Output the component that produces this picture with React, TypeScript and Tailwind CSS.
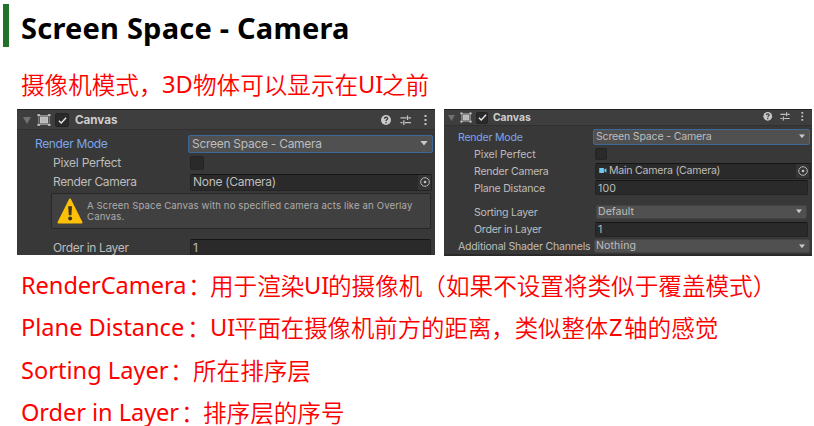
import React from "react";

const CJK = "font-['Noto_Sans_CJK_SC',sans-serif]";
const LATIN = "font-['Noto_Sans','Noto_Sans_CJK_SC',sans-serif]";

type Run = { text: string; box: string };

function Line({ runs, className }: { runs: Run[]; className: string }) {
  return (
    <p className={`flex items-center whitespace-nowrap pl-[21px] text-[#ff0000] ${className}`}>
      {runs.map((r, i) => (
        <span key={i} className={`block shrink-0 whitespace-pre ${r.box}`}>
          {r.text}
        </span>
      ))}
    </p>
  );
}

const han = `${CJK} text-[23.6px] font-[350]`;
const lat = `${LATIN} text-[23.6px]`;
const latTight = `${LATIN} text-[23.6px] tracking-[-0.06px]`;

function CanvasIcon({ className }: { className: string }) {
  return (
    <svg viewBox="0 0 14 12" className={className} fill="none" stroke="#c4c4c4">
      <rect x="3.5" y="3" width="7" height="6" fill="#b8b8b8" />
      <path d="M1.8 0.5v11M12.2 0.5v11M0.5 1.5h13M0.5 10.5h13" strokeWidth="0.9" opacity="0.65" />
      <path d="M0.5 1.2h2.6M0.5 10.8h2.6M10.9 1.2h2.6M10.9 10.8h2.6" strokeWidth="1.8" />
    </svg>
  );
}

function Check({ className, on }: { className: string; on?: boolean }) {
  return (
    <span className={`flex shrink-0 items-center justify-center rounded-[2px] border border-[#242424] bg-[#2a2a2a] ${className}`}>
      {on && (
        <svg viewBox="0 0 10 10" className="size-[9px]" fill="none" stroke="#e4e4e4" strokeWidth="1.6">
          <path d="M1 5.2 3.6 7.8 9 2" />
        </svg>
      )}
    </span>
  );
}

function HeaderIcons({ className }: { className: string }) {
  return (
    <svg viewBox="0 0 48 12" className={className} fill="none" stroke="#c4c4c4">
      <circle cx="6" cy="6" r="5" fill="#c9c9c9" stroke="none" />
      <path d="M4.4 4.7C4.5 2.7 7.7 2.8 7.6 4.7 7.5 5.9 6 5.8 6 7.1M6 8v1.3" stroke="#393939" strokeWidth="1.3" />
      <path d="M20.5 3.8h6M28.5 3.8h2.5M27.5 1.5v4.6M20.5 8.6h2M24.8 8.6h6.2M23.8 6.3v4.6" strokeWidth="1.3" />
      <path d="M44.5 1h2v2h-2zM44.5 5h2v2h-2zM44.5 9h2v2h-2z" fill="#c4c4c4" stroke="none" />
    </svg>
  );
}

function Arrow({ className = "" }: { className?: string }) {
  return (
    <svg viewBox="0 0 8 5" className={`h-[4.5px] w-[8px] shrink-0 ${className}`} fill="#c8c8c8">
      <path d="M0 0h8L4 5z" />
    </svg>
  );
}

function Fold({ className }: { className: string }) {
  return (
    <svg viewBox="0 0 8 7" className={className} fill="#717171">
      <path d="M0 0h8L4 7z" />
    </svg>
  );
}

function Picker({ className }: { className: string }) {
  return (
    <span className={`flex shrink-0 items-center justify-center bg-[#353535] ${className}`}>
      <svg viewBox="0 0 10 10" className="size-[10px]" fill="none" stroke="#b5b5b5">
        <circle cx="5" cy="5" r="4.3" />
        <circle cx="5" cy="5" r="1.3" fill="#c4c4c4" stroke="none" />
      </svg>
    </span>
  );
}

const input = "flex items-center whitespace-nowrap rounded-[2px] border border-[#242424] border-t-[#151515] bg-[#2a2a2a]";
const select = "flex items-center justify-between whitespace-nowrap rounded-[2px] border border-[#444] bg-[#505050]";
const active = "flex items-center justify-between whitespace-nowrap rounded-[2px] border border-[#3e6896] bg-[#505050]";

function LeftPanel() {
  return (
    <section className="h-[146px] w-[418px] shrink-0 overflow-hidden bg-[#383838] font-['Inter',sans-serif] text-[12px] tracking-[-0.3px] text-[#bdbdbd]">
      <header className="flex h-[21px] items-center border-t border-b border-t-[#222] border-b-[#303030] bg-[#3e3e3e] pt-px pl-[6px]">
        <Fold className="h-[7px] w-[8px]" />
        <CanvasIcon className="ml-[6px] h-[12px] w-[14px]" />
        <Check on className="ml-[4px] size-[14px]" />
        <b className="ml-[6px] pt-px text-[11.7px] font-bold tracking-[-0.05px] text-[#cecece]">Canvas</b>
        <HeaderIcons className="mr-[7px] ml-auto h-[12px] w-[48px]" />
      </header>
      <div className="flex h-[25px] items-center pt-[2px] pl-[18px]">
        <span className="w-[153px] tracking-[-0.35px] text-[#7ba5ea]">Render Mode</span>
        <div className={`${active} h-[18px] w-[245px] pr-[4px] pl-[3px]`}>
          <span className="tracking-[-0.28px]">Screen Space - Camera</span>
          <Arrow />
        </div>
      </div>
      <div className="flex h-[15px] items-center pl-[36px]">
        <span className="w-[137px] tracking-[-0.25px]">Pixel Perfect</span>
        <Check className="size-[14px]" />
      </div>
      <div className="flex h-[22px] items-center pt-[2px] pl-[36px]">
        <span className="w-[137px] tracking-[-0.35px]">Render Camera</span>
        <div className={`${input} h-[17px] w-[242px] justify-between pl-[2px]`}>
          <span className="tracking-[-0.3px]">None (Camera)</span>
          <Picker className="h-[15px] w-[13px]" />
        </div>
      </div>
      <div className="mt-[1px] ml-[34px] flex h-[36px] w-[380px] items-center rounded-[2px] border border-[#272727] bg-[#404040] pl-[5px]">
        <svg viewBox="0 0 26 26" className="size-[26px] shrink-0">
          <path d="M13 1.5 24.5 24.5h-23z" fill="#fec007" stroke="#fec007" strokeWidth="2" strokeLinejoin="round" />
          <path d="M11.2 8.2h3.8l-.6 9h-2.6z" fill="#3a3527" />
          <circle cx="13.1" cy="20.6" r="2" fill="#3a3527" />
        </svg>
        <p className="ml-[4px] whitespace-nowrap text-[9.6px] leading-[11.5px] tracking-[0.13px] text-[#adadad]">
          A Screen Space Canvas with no specified camera acts like an Overlay
          <br />
          Canvas.
        </p>
      </div>
      <div className="mt-[10px] flex h-[18px] items-center pl-[36px]">
        <span className="w-[137px] tracking-[-0.35px]">Order in Layer</span>
        <div className={`${input} h-[18px] w-[241px] pl-[2px]`}>1</div>
      </div>
    </section>
  );
}

function RightRow({ label, row, labelBox, children }: { label: string; row: string; labelBox: string; children: React.ReactNode }) {
  return (
    <div className={`flex shrink-0 items-center whitespace-nowrap ${row}`}>
      <span className={`shrink-0 ${labelBox}`}>{label}</span>
      {children}
    </div>
  );
}

function RightPanel() {
  return (
    <section className="flex h-[147px] w-[368px] shrink-0 flex-col overflow-hidden bg-[#383838] font-['Inter',sans-serif] text-[10.6px] tracking-[-0.25px] text-[#bdbdbd]">
      <header className="flex h-[17px] shrink-0 items-center border-t border-b border-t-[#222] border-b-[#303030] bg-[#3e3e3e] pl-[4px]">
        <Fold className="h-[6px] w-[7px]" />
        <CanvasIcon className="ml-[5px] h-[11px] w-[12px]" />
        <Check on className="ml-[4px] size-[12px]" />
        <b className="ml-[5px] text-[10.3px] font-bold tracking-[0px] text-[#cecece]">Canvas</b>
        <HeaderIcons className="mr-[7px] ml-auto h-[10.5px] w-[43px] -translate-y-px" />
      </header>
      <RightRow label="Render Mode" row="mt-[3px] h-[15px] pl-[14px]" labelBox="w-[135px] pt-[3px] text-[#7ba5ea]">
        <div className={`${active} h-[16px] w-[217px] pr-[3px] pl-[2px]`}>
          <span className="pt-px tracking-[-0.2px]">Screen Space - Camera</span>
          <Arrow className="scale-[0.85]" />
        </div>
      </RightRow>
      <RightRow label="Pixel Perfect" row="mt-[1px] h-[17px] pl-[30px]" labelBox="w-[121px] pt-[3px] tracking-[-0.1px]">
        <Check className="size-[12px]" />
      </RightRow>
      <RightRow label="Render Camera" row="h-[17px] pl-[30px]" labelBox="w-[121px] pt-[3px]">
        <div className={`${input} h-[16px] w-[216px] pl-[3px]`}>
          <svg viewBox="0 0 9 6" className="h-[5px] w-[8px]" fill="#6fc8ea">
            <path d="M0 0h5.6v6H0zM6 2l2.6-1.8v5.6L6 4z" />
          </svg>
          <span className="ml-[2px] pt-px tracking-[-0.25px]">Main Camera (Camera)</span>
          <Picker className="mr-px ml-auto h-[14px] w-[13px]" />
        </div>
      </RightRow>
      <RightRow label="Plane Distance" row="h-[17px] pl-[30px]" labelBox="w-[121px] pt-[3px]">
        <div className={`${input} h-[15px] w-[213px] pt-[2px] pl-[2px] tracking-[0.1px]`}>100</div>
      </RightRow>
      <RightRow label="Sorting Layer" row="mt-[7px] h-[17px] pl-[30px]" labelBox="w-[122px] pt-[3px]">
        <div className={`${select} h-[14px] w-[211px] pr-[3px] pl-px`}>
          <span className="pt-px tracking-[0px]">Default</span>
          <Arrow className="scale-[0.85]" />
        </div>
      </RightRow>
      <RightRow label="Order in Layer" row="h-[18px] pl-[30px]" labelBox="w-[121px] pt-[2px]">
        <div className={`${input} h-[15px] w-[213px] pt-px pl-[2px]`}>1</div>
      </RightRow>
      <RightRow label="Additional Shader Channels" row="h-[16px] pl-[14px]" labelBox="w-[136px] pt-[2px] tracking-[-0.23px]">
        <div className={`${select} h-[14px] w-[216px] pr-[3px] pl-px`}>
          <span className="tracking-[0.1px]">Nothing</span>
          <Arrow className="scale-[0.85]" />
        </div>
      </RightRow>
      <div className="mt-auto h-[2px] bg-[#2a2a2a]" />
    </section>
  );
}

export default function App() {
  return (
    <main className="h-[426px] w-[814px] overflow-hidden bg-white">
      <div className="flex h-[63px] pt-[4px] pl-[3px]">
        <span className="h-[43px] w-[6px] bg-[#217329]" />
        <h1 className="ml-[12px] h-[48px] whitespace-nowrap font-['Noto_Sans',sans-serif] text-[29px] leading-[48px] font-bold tracking-[0.22px] text-black">
          Screen Space - Camera
        </h1>
      </div>
      <Line
        className="h-[42px] leading-[42px]"
        runs={[
          { text: "摄像机模式，", box: `w-[141px] ${han}` },
          { text: "3D", box: `w-[31px] ${lat}` },
          { text: "物体可以显示在", box: `w-[165px] ${han}` },
          { text: "UI", box: `w-[24px] ${lat}` },
          { text: "之前", box: `w-[48px] ${han}` },
        ]}
      />
      <div className="mt-[4px] flex h-[147px] items-start gap-[9px] pl-[17px]">
        <LeftPanel />
        <RightPanel />
      </div>
      <div className="mt-[8px]">
        <Line
          className="h-[42px] leading-[42px]"
          runs={[
            { text: "RenderCamera", box: `w-[167px] ${latTight}` },
            { text: "：", box: `w-[22px] ${han}` },
            { text: "用于渲染", box: `w-[94px] ${han}` },
            { text: "UI", box: `w-[24px] ${lat}` },
            { text: "的摄像机（如果不设置将类似于覆盖模式）", box: `w-[450px] ${han}` },
          ]}
        />
        <Line
          className="h-[42px] leading-[42px]"
          runs={[
            { text: "Plane Distance", box: `w-[166px] ${lat}` },
            { text: "：", box: `w-[23px] ${han}` },
            { text: "UI", box: `w-[24px] ${lat}` },
            { text: "平面在摄像机前方的距离，类似整体", box: `w-[375px] font-['Noto_Sans_CJK_SC',sans-serif] text-[23.4px] font-[350]` },
            { text: "Z", box: `w-[15px] ${lat}` },
            { text: "轴的感觉", box: `w-[96px] ${han}` },
          ]}
        />
        <Line
          className="mt-px h-[42px] leading-[42px]"
          runs={[
            { text: "Sorting Layer", box: `w-[149px] ${lat}` },
            { text: "：", box: `w-[23px] ${han}` },
            { text: "所在排序层", box: `w-[120px] ${han}` },
          ]}
        />
        <Line
          className="h-[36px] items-start leading-[42px]"
          runs={[
            { text: "Order in Layer", box: `w-[160px] ${latTight}` },
            { text: "：", box: `w-[22px] ${han}` },
            { text: "排序层的序号", box: `w-[144px] ${han}` },
          ]}
        />
      </div>
    </main>
  );
}
